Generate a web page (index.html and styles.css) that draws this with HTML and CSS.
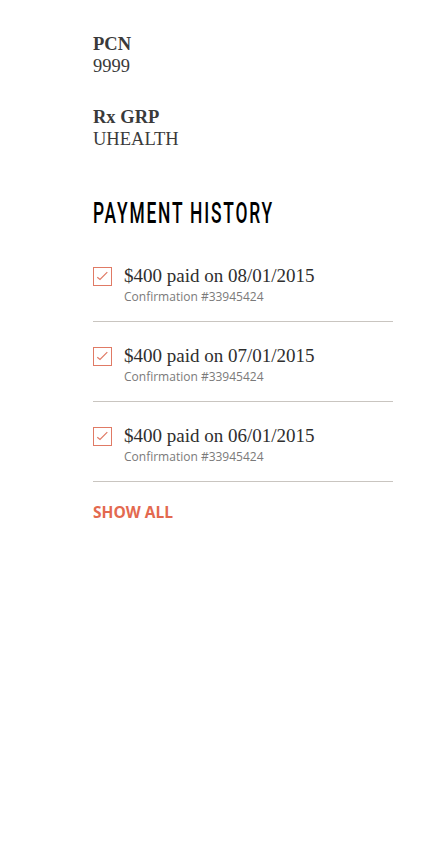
FILE: index.html
```html
<!DOCTYPE html>
<html>
<head>
<meta charset="utf-8">
<link rel="stylesheet" href="styles.css">
</head>
<body>
<main class="page">
  <section class="field">
    <div class="field-label">PCN</div>
    <div class="field-value">9999</div>
  </section>
  <section class="field">
    <div class="field-label">Rx GRP</div>
    <div class="field-value">UHEALTH</div>
  </section>
  <h2 class="heading">PAYMENT HISTORY</h2>
  <ul class="history">
    <li class="payment">
      <span class="check"><svg viewBox="0 0 17 17" width="17" height="17"><path d="M3.3 9.3 L6 11.5 L13.3 4.2" fill="none" stroke="#e07a65" stroke-width="1.2"/></svg></span>
      <div class="payment-body">
        <div class="payment-title">$400 paid on 08/01/2015</div>
        <div class="payment-conf">Confirmation #33945424</div>
      </div>
    </li>
    <li class="payment">
      <span class="check"><svg viewBox="0 0 17 17" width="17" height="17"><path d="M3.3 9.3 L6 11.5 L13.3 4.2" fill="none" stroke="#e07a65" stroke-width="1.2"/></svg></span>
      <div class="payment-body">
        <div class="payment-title">$400 paid on 07/01/2015</div>
        <div class="payment-conf">Confirmation #33945424</div>
      </div>
    </li>
    <li class="payment">
      <span class="check"><svg viewBox="0 0 17 17" width="17" height="17"><path d="M3.3 9.3 L6 11.5 L13.3 4.2" fill="none" stroke="#e07a65" stroke-width="1.2"/></svg></span>
      <div class="payment-body">
        <div class="payment-title">$400 paid on 06/01/2015</div>
        <div class="payment-conf">Confirmation #33945424</div>
      </div>
    </li>
  </ul>
  <a class="show-all" href="#">SHOW ALL</a>
</main>
</body>
</html>
```
FILE: styles.css
```css
* { box-sizing: border-box; }
html, body { margin: 0; padding: 0; background: #fff; }
.page {
  padding: 33px 47px 0 93px;
}
.field { margin-bottom: 29px; }
.field-label {
  font-family: "Liberation Serif", serif;
  font-weight: bold;
  font-size: 18.5px;
  line-height: 22px;
  color: #3a3a3a;
}
.field-value {
  font-family: "Liberation Serif", serif;
  font-size: 18.5px;
  line-height: 22px;
  color: #3a3a3a;
}
.heading {
  margin: 45px 0 0 0;
  font-family: Roboto, sans-serif;
  font-weight: 500;
  font-size: 29px;
  line-height: 36px;
  letter-spacing: 3px;
  color: #000;
  transform: scaleX(0.6);
  transform-origin: left center;
  white-space: nowrap;
}
.history {
  list-style: none;
  margin: 26px 0 0 0;
  padding: 0;
}
.payment {
  display: flex;
  gap: 12px;
  align-items: flex-start;
  border-bottom: 1px solid #c9c5c0;
  padding: 7px 0 16px 0;
  margin-bottom: 15px;
}
.check {
  flex: none;
  width: 19px;
  height: 19px;
  border: 1px solid #e07a65;
  margin-top: 3px;
  display: flex;
}
.check svg { display: block; width: 17px; height: 17px; }
.payment-title {
  font-family: "Liberation Serif", serif;
  font-size: 19px;
  line-height: 24px;
  color: #2e2e2e;
}
.payment-conf {
  font-family: "Open Sans", sans-serif;
  font-size: 12px;
  line-height: 17px;
  color: #7a7a7a;
}
.show-all {
  display: inline-block;
  margin-top: 5px;
  font-family: "Open Sans", sans-serif;
  font-weight: bold;
  font-size: 15.5px;
  line-height: 20px;
  color: #e3694f;
  text-decoration: none;
}
```
